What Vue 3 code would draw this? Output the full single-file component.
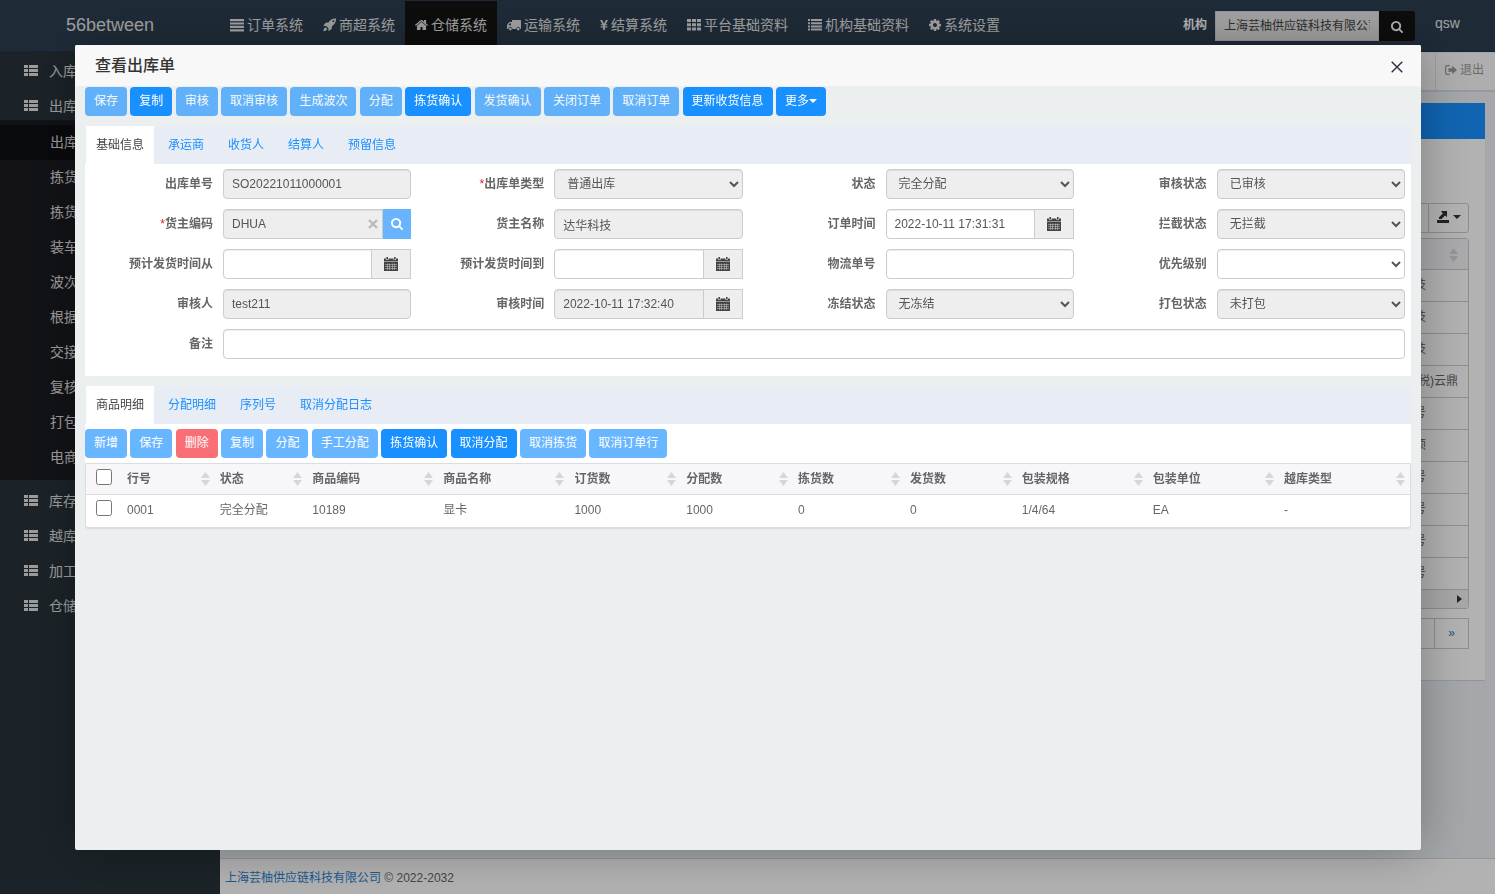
<script setup>
import { ref } from 'vue'

const SEARCH =
  'M1216 832q0-185-131.5-316.5t-316.5-131.5-316.5 131.5-131.5 316.5 131.5 316.5 316.5 131.5 316.5-131.5 131.5-316.5zm512 832q0 52-38 90t-90 38q-54 0-90-38l-343-342q-179 124-399 124-143 0-273.5-55.5t-225-150-150-225-55.5-273.5 55.5-273.5 150-225 225-150 273.5-55.5 273.5 55.5 225 150 150 225 55.5 273.5q0 220-124 399l343 343q37 37 37 90z'
const CALENDAR =
  'M0 5H14V14H0ZM0 1.5H2V3H4.5V1.5H9.5V3H12V1.5H14V4.4H0ZM2.4 0H4V2.4H2.4ZM10 0H11.6V2.4H10Z'

const topNav = [
  { label: '订单系统', w: 14, box: '0 0 14 14', d: 'M0 1H14V3.2H0ZM0 4.4H14V6.6H0ZM0 7.8H14V10H0ZM0 11.2H14V13.4H0Z' },
  { label: '商超系统', w: 13, box: '0 0 13 14', d: 'M13 .6C9.5 .5 7.3 1.8 5.4 4.6L2.6 4.8L.3 8.1L3.2 7.9L5.6 10.4L5.3 13.3L8.7 11L8.9 8.2C11.7 6.3 13.1 4.1 13 .6ZM10.4 2.3A1 1 0 1 1 10.4 4.3A1 1 0 1 1 10.4 2.3ZM2.6 9.3L4.3 11C3.6 12.6 2 13.2.3 13.3C.4 11.6 1 10 2.6 9.3Z' },
  { label: '仓储系统', w: 13, box: '80 128 1632 1536', active: true, d: 'M1472 992v480q0 26-19 45t-45 19h-384v-384h-256v384h-384q-26 0-45-19t-19-45v-480q0-1 .5-3t.5-3l575-474 575 474q1 2 1 6zm223-69l-62 74q-8 9-21 11h-3q-13 0-21-7l-692-577-692 577q-12 8-24 7-13-2-21-11l-62-74q-8-10-7-23.5t11-21.5l719-599q32-26 76-26t76 26l244 204v-195q0-14 9-23t23-9h192q14 0 23 9t9 23v408l219 182q10 8 11 21.5t-7 23.5z' },
  { label: '运输系统', w: 14, box: '0 0 14 14', d: 'M5.6 2H13.4Q14 2 14 2.6V10.4Q14 11 13.2 11A2 2 0 0 0 9.2 11H5.4A2 2 0 0 0 1.4 11H.6Q0 11 0 10.4V7.2Q0 6.6.4 6.2L2.2 4.3Q2.5 4 3 4H5V2.6Q5 2 5.6 2ZM1.2 7.2H4V5.2H3Z M3.4 9.7A1.4 1.4 0 1 1 3.4 12.5A1.4 1.4 0 1 1 3.4 9.7Z M11.2 9.7A1.4 1.4 0 1 1 11.2 12.5A1.4 1.4 0 1 1 11.2 9.7Z' },
  { label: '结算系统', w: 8, box: '0 0 8 14', d: 'M0 2H2.1L4 5.7L5.9 2H8L5.7 6.2H7.3V7.3H5L4.9 7.8V8.3H7.3V9.4H4.9V12H3.1V9.4H.7V8.3H3.1V7.8L3 7.3H.7V6.2H2.3Z' },
  { label: '平台基础资料', w: 14, box: '0 0 14 14', d: 'M0 1H4V4H0ZM5 1H9V4H5ZM10 1H14V4H10ZM0 5.2H4V8.2H0ZM5 5.2H9V8.2H5ZM10 5.2H14V8.2H10ZM0 9.4H4V12.4H0ZM5 9.4H9V12.4H5ZM10 9.4H14V12.4H10Z' },
  { label: '机构基础资料', w: 14, box: '0 0 14 14', d: 'M0 1H2V3H0ZM3 1H14V3H3ZM0 4.2H2V6.2H0ZM3 4.2H14V6.2H3ZM0 7.4H2V9.4H0ZM3 7.4H14V9.4H3ZM0 10.6H2V12.6H0ZM3 10.6H14V12.6H3Z' },
  { label: '系统设置', w: 12, box: '128 128 1536 1536', d: 'M1152 896q0-106-75-181t-181-75-181 75-75 181 75 181 181 75 181-75 75-181zm512-109v222q0 12-8 23t-20 13l-185 28q-19 54-39 91 35 50 107 138 10 12 10 25t-9 23q-27 37-99 108t-94 71q-12 0-26-9l-138-108q-44 23-91 38-16 136-29 186-7 28-36 28h-222q-14 0-24.5-8.5t-11.5-21.5l-28-184q-49-16-90-37l-141 107q-10 9-25 9-14 0-25-11-126-114-165-168-7-10-7-23 0-12 8-23 15-21 51-66.5t54-70.5q-27-50-41-99l-183-27q-13-2-21-12.5t-8-23.5v-222q0-12 8-23t19-13l186-28q14-46 39-92-40-57-107-138-10-12-10-24 0-10 9-23 26-36 98.5-107.5t94.5-71.5q13 0 26 10l138 107q44-23 91-38 16-136 29-186 7-28 36-28h222q14 0 24.5 8.5t11.5 21.5l28 184q49 16 90 37l142-107q9-9 24-9 13 0 25 10 129 119 165 170 7 8 7 22 0 12-8 23-15 21-51 66.5t-54 70.5q26 50 41 98l183 28q13 2 21 12.5t8 23.5z' }
]

const sideNav = [
  { label: '入库' },
  { label: '出库', children: ['出库', '拣货', '拣货', '装车', '波次', '根据', '交接', '复核', '打包', '电商'] },
  { label: '库存' },
  { label: '越库' },
  { label: '加工' },
  { label: '仓储' }
]

const listRows = ['技', '技', '技', '(税)云鼎', '号', '顷', '号', '号', '号', '号']

const orderActions = [
  { label: '保存', off: true },
  { label: '复制' },
  { label: '审核', off: true },
  { label: '取消审核', off: true },
  { label: '生成波次', off: true },
  { label: '分配', off: true },
  { label: '拣货确认' },
  { label: '发货确认', off: true },
  { label: '关闭订单', off: true },
  { label: '取消订单', off: true },
  { label: '更新收货信息' },
  { label: '更多', caret: true }
]
const lineActions = [
  { label: '新增', off: true },
  { label: '保存', off: true },
  { label: '删除', off: true, danger: true },
  { label: '复制', off: true },
  { label: '分配', off: true },
  { label: '手工分配', off: true },
  { label: '拣货确认' },
  { label: '取消分配' },
  { label: '取消拣货', off: true },
  { label: '取消订单行', off: true }
]

const infoTabs = ['基础信息', '承运商', '收货人', '结算人', '预留信息']
const lineTabs = ['商品明细', '分配明细', '序列号', '取消分配日志']
const infoTab = ref(0)
const lineTab = ref(0)

const fields = ref([
  { id: 'orderNo', label: '出库单号', kind: 'text', value: 'SO20221011000001', off: true },
  { id: 'orderType', label: '出库单类型', kind: 'select', value: '普通出库', off: true, req: true },
  { id: 'status', label: '状态', kind: 'select', value: '完全分配', off: true },
  { id: 'auditStatus', label: '审核状态', kind: 'select', value: '已审核', off: true },
  { id: 'ownerCode', label: '货主编码', kind: 'lookup', value: 'DHUA', off: true, req: true },
  { id: 'ownerName', label: '货主名称', kind: 'text', value: '达华科技', off: true },
  { id: 'orderTime', label: '订单时间', kind: 'date', value: '2022-10-11 17:31:31' },
  { id: 'holdStatus', label: '拦截状态', kind: 'select', value: '无拦截', off: true },
  { id: 'shipFrom', label: '预计发货时间从', kind: 'date', value: '' },
  { id: 'shipTo', label: '预计发货时间到', kind: 'date', value: '' },
  { id: 'trackingNo', label: '物流单号', kind: 'text', value: '' },
  { id: 'priority', label: '优先级别', kind: 'select', value: '' },
  { id: 'auditor', label: '审核人', kind: 'text', value: 'test211', off: true },
  { id: 'auditTime', label: '审核时间', kind: 'date', value: '2022-10-11 17:32:40', off: true },
  { id: 'freezeStatus', label: '冻结状态', kind: 'select', value: '无冻结', off: true },
  { id: 'packStatus', label: '打包状态', kind: 'select', value: '未打包', off: true },
  { id: 'remark', label: '备注', kind: 'text', value: '', wide: true }
])

const columns = [
  { title: '行号', size: 's' },
  { title: '状态', size: 's' },
  { title: '商品编码', size: 'l' },
  { title: '商品名称', size: 'l' },
  { title: '订货数', size: 'm' },
  { title: '分配数', size: 'm' },
  { title: '拣货数', size: 'm' },
  { title: '发货数', size: 'm' },
  { title: '包装规格', size: 'l' },
  { title: '包装单位', size: 'l' },
  { title: '越库类型', size: 'l' }
]
const lines = [['0001', '完全分配', '10189', '显卡', '1000', '1000', '0', '0', '1/4/64', 'EA', '-']]
</script>

<template>
  <div class="app">
    <header class="topbar">
      <a class="brand" href="#">56between</a>
      <nav class="topnav">
        <a v-for="n in topNav" :key="n.label" href="#" :class="{ active: n.active }">
          <svg :width="n.w" height="14" :viewBox="n.box" aria-hidden="true"><path :d="n.d" fill-rule="evenodd" /></svg>
          <span>{{ n.label }}</span>
        </a>
      </nav>
      <form class="org" @submit.prevent>
        <label for="org">机构</label>
        <input id="org" type="text" value="上海芸柚供应链科技有限公司" readonly />
        <button type="button" aria-label="搜索">
          <svg width="12" height="12" viewBox="64 128 1664 1664"><path :d="SEARCH" /></svg>
        </button>
      </form>
      <a class="user" href="#">qsw</a>
    </header>

    <aside class="sidebar">
      <ul>
        <li v-for="s in sideNav" :key="s.label">
          <a class="parent" href="#">
            <svg width="14" height="11" viewBox="0 0 14 11" aria-hidden="true">
              <path d="M0 0H4V3H0ZM5 0H14V3H5ZM0 4H4V7H0ZM5 4H14V7H5ZM0 8H4V11H0ZM5 8H14V11H5Z" />
            </svg>
            <span>{{ s.label }}</span>
          </a>
          <ul v-if="s.children" class="sub">
            <li v-for="(c, i) in s.children" :key="i">
              <a href="#" :class="{ active: i === 0 }">{{ c }}</a>
            </li>
          </ul>
        </li>
      </ul>
    </aside>

    <main class="main">
      <div class="tabstrip">
        <a href="#">
          <svg width="12" height="10" viewBox="0 0 12 10" aria-hidden="true">
            <path d="M4.6 0V1.2H2.3Q1.2 1.2 1.2 2.3V7.7Q1.2 8.8 2.3 8.8H4.6V10H2.3Q0 10 0 7.7V2.3Q0 0 2.3 0ZM7.2 .8L12 5L7.2 9.2V6.8H3.4V3.2H7.2Z" />
          </svg>
          <span>退出</span>
        </a>
      </div>
      <section class="box">
        <div class="box-head"></div>
        <div class="box-body">
          <div class="tools">
            <button type="button" class="blank" aria-label="列"></button>
            <button type="button" aria-label="导出">
              <svg width="12" height="12" viewBox="0 0 12 12" aria-hidden="true">
                <path d="M0 9H12V12H0ZM4 0H10V6L8 4.4L4.6 8H2L2 6.2L5.8 2.4Z" />
              </svg>
              <i class="caret"></i>
            </button>
          </div>
          <div class="list">
            <table>
              <colgroup><col /><col class="last" /></colgroup>
              <thead>
                <tr>
                  <th></th>
                  <th>
                    <svg class="sort" width="9" height="14" viewBox="0 0 9 14"><path d="M4.5 0L9 6H0ZM4.5 14L0 8H9Z" /></svg>
                  </th>
                </tr>
              </thead>
              <tbody>
                <tr v-for="(r, i) in listRows" :key="i"><td></td><td>{{ r }}</td></tr>
              </tbody>
            </table>
            <div class="hscroll">
              <svg width="5" height="8" viewBox="0 0 5 8"><path d="M0 0L5 4L0 8Z" /></svg>
            </div>
          </div>
          <nav class="pager"><a href="#">›</a><a href="#">»</a></nav>
        </div>
      </section>
      <footer class="foot"><a href="#">上海芸柚供应链科技有限公司</a> © 2022-2032</footer>
    </main>

    <div class="shade">
      <section class="dialog" role="dialog" aria-labelledby="dlg-title">
        <header class="dialog-head">
          <h2 id="dlg-title">查看出库单</h2>
          <button type="button" aria-label="关闭">
            <svg width="12" height="12" viewBox="0 0 12 12"><path d="M.7 .7L11.3 11.3M11.3 .7L.7 11.3" /></svg>
          </button>
        </header>
        <div class="dialog-body">
          <div class="actions">
            <template v-for="a in orderActions" :key="a.label">
              <button type="button" class="btn" :disabled="a.off">{{ a.label }}<i v-if="a.caret" class="caret"></i></button>{{ ' ' }}
            </template>
          </div>

          <div class="tabs">
            <button v-for="(t, i) in infoTabs" :key="t" type="button" :class="{ active: i === infoTab }" @click="infoTab = i">{{ t }}</button>
          </div>
          <form class="info" @submit.prevent>
            <div v-for="f in fields" :key="f.id" class="field" :class="{ wide: f.wide }">
              <label :for="f.id"><em v-if="f.req">*</em>{{ f.label }}</label>
              <select v-if="f.kind === 'select'" :id="f.id" :disabled="f.off" class="ctl">
                <option>{{ f.value }}</option>
              </select>
              <div v-else class="group">
                <input :id="f.id" v-model="f.value" type="text" class="ctl" :disabled="f.off" :class="{ joined: f.kind !== 'text' }" />
                <button v-if="f.kind === 'lookup'" type="button" class="clear" aria-label="清除">
                  <svg width="10" height="10" viewBox="0 0 10 10"><path d="M1 1L9 9M9 1L1 9" /></svg>
                </button>
                <button v-if="f.kind === 'lookup'" type="button" class="find" aria-label="查找">
                  <svg width="12" height="12" viewBox="64 128 1664 1664"><path :d="SEARCH" /></svg>
                </button>
                <button v-if="f.kind === 'date'" type="button" class="addon" aria-label="选择日期">
                  <svg width="14" height="14" viewBox="0 0 14 14">
                    <path :d="CALENDAR" />
                    <path class="grid" d="M1 7.5H13M1 9.5H13M1 11.5H13M3.5 6.5V13M5.5 6.5V13M8.5 6.5V13M10.5 6.5V13" />
                  </svg>
                </button>
              </div>
            </div>
          </form>

          <div class="tabs">
            <button v-for="(t, i) in lineTabs" :key="t" type="button" :class="{ active: i === lineTab }" @click="lineTab = i">{{ t }}</button>
          </div>
          <div class="actions white">
            <template v-for="a in lineActions" :key="a.label">
              <button type="button" class="btn" :class="{ danger: a.danger }" :disabled="a.off">{{ a.label }}</button>{{ ' ' }}
            </template>
          </div>
          <div class="lines">
            <table>
              <colgroup>
                <col class="check" />
                <col v-for="c in columns" :key="c.title" :class="c.size" />
              </colgroup>
              <thead>
                <tr>
                  <th><input type="checkbox" aria-label="全选" /></th>
                  <th v-for="c in columns" :key="c.title">
                    <div class="th">
                      <span>{{ c.title }}</span>
                      <svg class="sort" width="9" height="14" viewBox="0 0 9 14"><path d="M4.5 0L9 6H0ZM4.5 14L0 8H9Z" /></svg>
                    </div>
                  </th>
                </tr>
              </thead>
              <tbody>
                <tr v-for="(l, i) in lines" :key="i">
                  <td><input type="checkbox" aria-label="选择行" /></td>
                  <td v-for="(v, j) in l" :key="j">{{ v }}</td>
                </tr>
              </tbody>
            </table>
          </div>
        </div>
      </section>
    </div>
  </div>
</template>

<style>
body {
  margin: 0;
}
</style>

<style scoped>
.app {
  display: grid;
  grid-template-columns: 220px 1fr;
  grid-template-rows: 52px 1fr;
  min-height: 100vh;
  font: 12px/18px "Liberation Sans", "Noto Sans CJK SC", sans-serif;
  color: #666;
  background: #ecf0f5;
}
*,
*::before,
*::after {
  box-sizing: border-box;
}
a {
  color: #337ab7;
  text-decoration: none;
}
button,
input,
select {
  font: inherit;
  margin: 0;
}
button {
  padding: 0;
  border: 0;
  background: none;
  cursor: pointer;
}
svg {
  fill: currentColor;
  flex: none;
}
ul {
  list-style: none;
  margin: 0;
  padding: 0;
}

/* top bar */
.topbar {
  grid-column: 1 / -1;
  display: flex;
  background: #2c3e50;
  border-bottom: 1px solid #263545;
}
.topbar a {
  color: #e6e6e6;
}
.brand {
  width: 220px;
  text-align: center;
  font-size: 18px;
  line-height: 50px;
}
.topnav {
  display: flex;
  margin-top: 1px;
}
.topnav a {
  display: flex;
  align-items: center;
  gap: 3px;
  padding: 0 10px 2px;
  font-size: 14px;
  line-height: 48px;
  white-space: nowrap;
}
.topnav a.active {
  background: #131313;
}
.org {
  display: flex;
  margin: 11px 20px 0 auto;
  height: 30px;
}
.org label {
  width: 32px;
  font-weight: bold;
  line-height: 28px;
  color: #fff;
}
.org input {
  width: 164px;
  padding: 0 8px;
  border: 1px solid #d2d6de;
  background: #e8e8e8;
  color: #444;
}
.org button {
  width: 36px;
  border-radius: 0 3px 3px 0;
  background: #131313;
  color: #fff;
}
.org button svg {
  vertical-align: middle;
}
.user {
  width: 60px;
  font-size: 14px;
  line-height: 46px;
}

/* sidebar */
.sidebar {
  padding-top: 1px;
  background: #28333a;
}
.sidebar a {
  color: #e0e0e0;
  font-size: 14px;
}
.parent {
  display: flex;
  align-items: center;
  gap: 11px;
  height: 35px;
  padding-left: 24px;
}
.sub {
  margin: -3px 0 3px;
  padding: 5px 0;
  background: #1a1b22;
}
.sub a {
  display: block;
  padding-left: 50px;
  line-height: 35px;
}
.sub a.active {
  background: #0e0f14;
}

/* page behind the dialog */
.main {
  display: flex;
  flex-direction: column;
  padding-top: 1px;
  min-width: 0;
}
.tabstrip {
  display: flex;
  justify-content: flex-end;
  height: 39px;
  background: #fafafa;
  border-bottom: 2px solid #d8dce2;
}
.tabstrip a {
  display: flex;
  align-items: center;
  gap: 3px;
  width: 60px;
  padding: 0 0 4px 9px;
  border-left: 1px solid #e4e4e4;
  color: #999;
}
.box {
  margin: 11px 10px 0;
  background: #fff;
  border-bottom: 1px solid #d2d6de;
}
.box-head {
  height: 36px;
  background: #1890ff;
}
.box-body {
  padding: 64px 16px 31px;
}
.tools {
  display: flex;
  justify-content: flex-end;
}
.tools button {
  display: flex;
  align-items: center;
  justify-content: center;
  gap: 4px;
  width: 41px;
  height: 30px;
  padding-bottom: 2px;
  border: 1px solid #ccc;
  border-radius: 0 3px 3px 0;
  color: #333;
}
.tools .blank {
  border-right: 0;
  border-radius: 3px 0 0 3px;
}
.caret {
  display: inline-block;
  border: 4px solid transparent;
  border-top-color: currentColor;
  border-bottom: 0;
  vertical-align: middle;
}
.list {
  margin-top: 5px;
  border: 1px solid #ccc;
  border-radius: 3px;
}
table {
  width: 100%;
  border-collapse: collapse;
  table-layout: fixed;
}
.list .last {
  width: 64px;
}
.list th {
  height: 30px;
  padding: 0 10px;
  background: #f5f5f8;
  text-align: right;
}
.list td {
  height: 32px;
  padding: 0 0 0 10px;
  border-top: 1px solid #ccc;
  white-space: nowrap;
}
.sort {
  color: #d6d6da;
  vertical-align: middle;
}
.hscroll {
  display: flex;
  justify-content: flex-end;
  align-items: center;
  height: 19px;
  padding-right: 6px;
  border-top: 1px solid #ccc;
  background: #f1f1f1;
  color: #333;
}
.pager {
  display: flex;
  justify-content: flex-end;
  margin-top: 9px;
}
.pager a {
  padding: 0 13px;
  margin-left: -1px;
  border: 1px solid #ccc;
  line-height: 29px;
}
.foot {
  height: 36px;
  margin-top: auto;
  padding: 10px 5px 0;
  border-top: 1px solid #d2d6de;
  background: #fff;
}
.foot a {
  color: #2a7fd0;
}

/* dialog */
.shade {
  position: fixed;
  inset: 0;
  display: flex;
  padding: 45px 74px 44px 75px;
  background: rgba(0, 0, 0, 0.3);
}
.dialog {
  flex: 1;
  min-width: 0;
  display: flex;
  flex-direction: column;
  background: #ebeff0;
  border-radius: 2px;
  box-shadow: 1px 1px 50px rgba(0, 0, 0, 0.3);
}
.dialog-head {
  display: flex;
  justify-content: space-between;
  align-items: center;
  height: 41px;
  padding: 0 18px 0 20px;
  background: #f8f8f8;
  border-radius: 2px 2px 0 0;
}
.dialog-head h2 {
  margin: 0;
  font-size: 16px;
  font-weight: 500;
  line-height: 40px;
  color: #333;
}
.dialog-head path,
.clear path {
  fill: none;
  stroke: #2d2c3b;
  stroke-width: 1.4;
}
.dialog-head svg {
  display: block;
  margin-top: 3px;
}
.dialog-body {
  flex: 1;
  overflow: auto;
  padding: 1px 10px 0;
}
.actions {
  margin-bottom: 10px;
  height: 29px;
  white-space: nowrap;
}
.actions.white {
  margin: 0;
  padding: 5px 0;
  height: 39px;
  background: #fff;
}
.btn {
  height: 29px;
  padding: 0 9px 2px;
  border-radius: 4px;
  background: #1890ff;
  color: #fff;
  vertical-align: top;
}
.btn.danger {
  background: #f5222d;
}
.btn:disabled {
  opacity: 0.65;
  cursor: not-allowed;
}
.tabs {
  display: flex;
  gap: 2px;
  height: 38px;
  background: #e8ecf5;
}
.tabs button {
  padding: 0 10px;
  border: solid transparent;
  border-width: 0 1px;
  background-clip: padding-box;
  color: #1890ff;
}
.tabs .active {
  background-color: #fff;
  color: #444;
}
.info {
  display: grid;
  grid-template-columns: repeat(4, 1fr);
  gap: 10px 0;
  margin-bottom: 10px;
  padding: 5px 1px 17px 0;
  background: #fff;
}
.field {
  display: grid;
  grid-template-columns: calc((100% + 5px) * 5 / 12) 1fr;
  padding-right: 5px;
}
.field.wide {
  grid-column: 1 / -1;
  grid-template-columns: calc((100% + 5px) * 5 / 48) 1fr;
}
.field label {
  padding-right: 10px;
  text-align: right;
  font-weight: bold;
  line-height: 30px;
}
.field em {
  color: #e02020;
  font-style: normal;
  font-weight: normal;
}
.ctl {
  width: 100%;
  min-width: 0;
  height: 30px;
  padding: 0 8px;
  border: 1px solid #ccc;
  border-radius: 4px;
  background-color: #fff;
  box-shadow: inset 0 1px 1px rgba(0, 0, 0, 0.075);
  color: #555;
}
.ctl:disabled {
  background-color: #eee;
  opacity: 1;
}
.ctl.joined {
  border-radius: 4px 0 0 4px;
}
.group {
  position: relative;
  display: flex;
}
.addon {
  display: flex;
  align-items: center;
  justify-content: center;
  flex: none;
  width: 40px;
  margin-left: -1px;
  border: 1px solid #ccc;
  background: #eee;
  color: #444;
}
.addon .grid {
  fill: none;
  stroke: #eee;
  stroke-width: 0.4;
}
.find {
  display: flex;
  align-items: center;
  justify-content: center;
  flex: none;
  width: 28px;
  background: #69b4ff;
  color: #fff;
}
.clear {
  position: absolute;
  top: 10px;
  right: 33px;
  line-height: 10px;
}
.clear path {
  stroke: #bbb;
  stroke-width: 2.4;
}
.lines {
  border: 1px solid #ddd;
  border-radius: 0 0 3px 3px;
  background: #fff;
  box-shadow: 0 1px 1px rgba(0, 0, 0, 0.08);
}
.lines .check {
  width: 36px;
}
.lines .s {
  width: 7%;
}
.lines .m {
  width: 8.45%;
}
.lines .l {
  width: 9.9%;
}
.lines th,
.lines td {
  padding: 0 5px;
  height: 30px;
  text-align: left;
}
.lines thead {
  background: #f7f7fa;
}
.lines td {
  height: 33px;
  padding-bottom: 2px;
  border-top: 1px solid #ddd;
}
.lines input {
  display: block;
  width: 16px;
  height: 16px;
  margin: -4px 0 0 5px;
}
.th {
  display: flex;
  justify-content: space-between;
  align-items: center;
}
</style>
